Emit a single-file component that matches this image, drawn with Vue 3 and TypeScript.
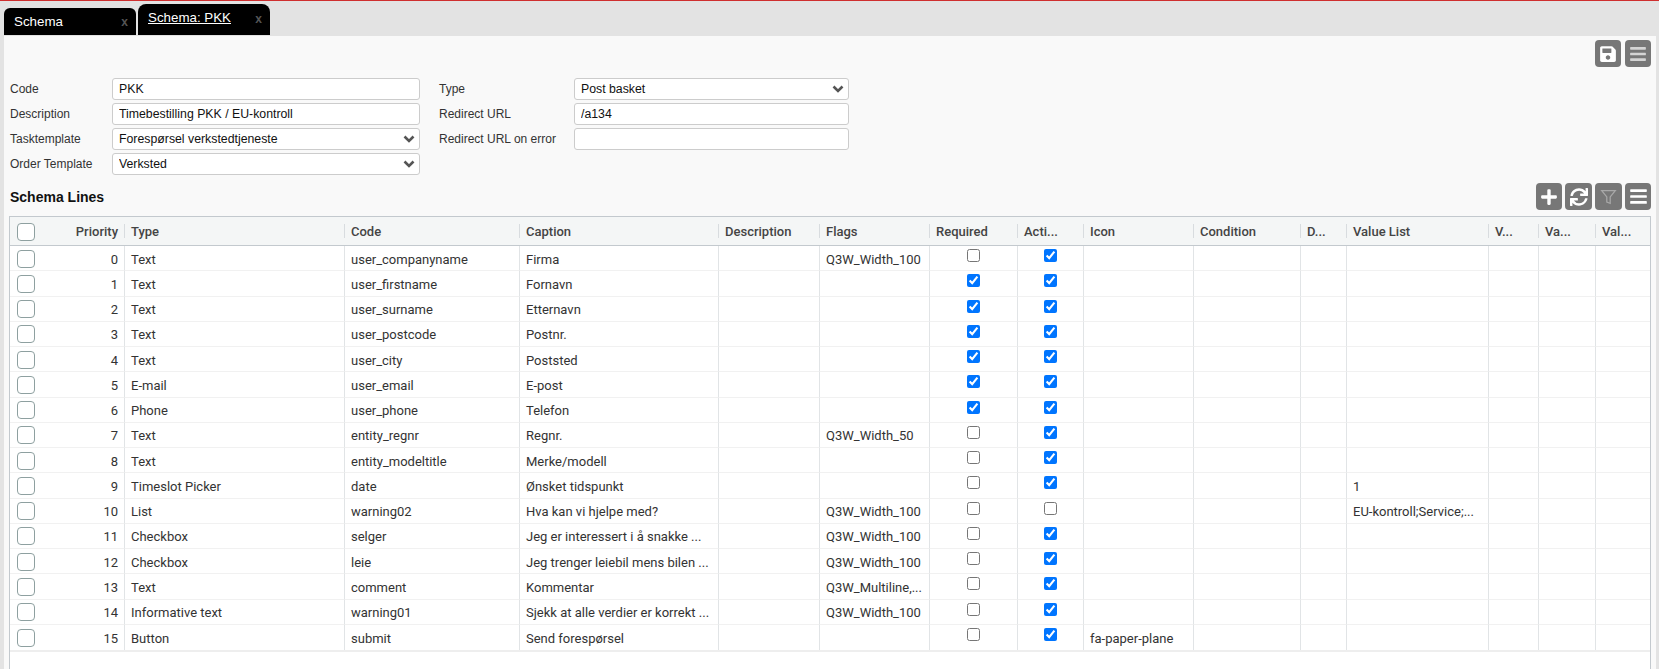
<script setup lang="ts">
interface Col {
  label: string
  width: number
  cls?: string
}
interface Line {
  type: string
  code: string
  caption: string
  flags?: string
  required: boolean
  active: boolean
  icon?: string
  valueList?: string
}

const columns: Col[] = [
  { label: "", width: 49, cls: "sel" },
  { label: "Priority", width: 65, cls: "num" },
  { label: "Type", width: 220 },
  { label: "Code", width: 175 },
  { label: "Caption", width: 199 },
  { label: "Description", width: 101 },
  { label: "Flags", width: 110 },
  { label: "Required", width: 88 },
  { label: "Acti...", width: 66 },
  { label: "Icon", width: 110 },
  { label: "Condition", width: 107 },
  { label: "D...", width: 46 },
  { label: "Value List", width: 142 },
  { label: "V...", width: 50 },
  { label: "Va...", width: 57 },
  { label: "Val...", width: 57 },
]

const lines: Line[] = [
  { type: "Text", code: "user_companyname", caption: "Firma", flags: "Q3W_Width_100", required: false, active: true },
  { type: "Text", code: "user_firstname", caption: "Fornavn", required: true, active: true },
  { type: "Text", code: "user_surname", caption: "Etternavn", required: true, active: true },
  { type: "Text", code: "user_postcode", caption: "Postnr.", required: true, active: true },
  { type: "Text", code: "user_city", caption: "Poststed", required: true, active: true },
  { type: "E-mail", code: "user_email", caption: "E-post", required: true, active: true },
  { type: "Phone", code: "user_phone", caption: "Telefon", required: true, active: true },
  { type: "Text", code: "entity_regnr", caption: "Regnr.", flags: "Q3W_Width_50", required: false, active: true },
  { type: "Text", code: "entity_modeltitle", caption: "Merke/modell", required: false, active: true },
  { type: "Timeslot Picker", code: "date", caption: "Ønsket tidspunkt", required: false, active: true, valueList: "1" },
  { type: "List", code: "warning02", caption: "Hva kan vi hjelpe med?", flags: "Q3W_Width_100", required: false, active: false, valueList: "EU-kontroll;Service;..." },
  { type: "Checkbox", code: "selger", caption: "Jeg er interessert i å snakke ...", flags: "Q3W_Width_100", required: false, active: true },
  { type: "Checkbox", code: "leie", caption: "Jeg trenger leiebil mens bilen ...", flags: "Q3W_Width_100", required: false, active: true },
  { type: "Text", code: "comment", caption: "Kommentar", flags: "Q3W_Multiline,...", required: false, active: true },
  { type: "Informative text", code: "warning01", caption: "Sjekk at alle verdier er korrekt ...", flags: "Q3W_Width_100", required: false, active: true },
  { type: "Button", code: "submit", caption: "Send forespørsel", required: false, active: true, icon: "fa-paper-plane" },
]

const barsPath = "M16 132h416c8.837 0 16-7.163 16-16V76c0-8.837-7.163-16-16-16H16C7.163 60 0 67.163 0 76v40c0 8.837 7.163 16 16 16zm0 160h416c8.837 0 16-7.163 16-16v-40c0-8.837-7.163-16-16-16H16c-8.837 0-16 7.163-16 16v40c0 8.837 7.163 16 16 16zm0 160h416c8.837 0 16-7.163 16-16v-40c0-8.837-7.163-16-16-16H16c-8.837 0-16 7.163-16 16v40c0 8.837 7.163 16 16 16z"
</script>

<template>
  <div class="page">
    <nav class="tabs">
      <div class="tab">
        <span class="tab-name">Schema</span>
        <span class="tab-x">x</span>
      </div>
      <div class="tab tab-active">
        <a class="tab-name">Schema: PKK</a>
        <span class="tab-x">x</span>
      </div>
    </nav>

    <main class="panel">
      <div class="toolbar toolbar-top">
        <button class="tool" type="button">
          <svg viewBox="0 0 448 512" width="16" height="18"><path fill="#fff" d="M433.941 129.941l-83.882-83.882A48 48 0 0 0 316.118 32H48C21.49 32 0 53.49 0 80v352c0 26.51 21.49 48 48 48h352c26.51 0 48-21.49 48-48V163.882a48 48 0 0 0-14.059-33.941zM224 416c-35.346 0-64-28.654-64-64 0-35.346 28.654-64 64-64s64 28.654 64 64c0 35.346-28.654 64-64 64zm96-304.52V212c0 6.627-5.373 12-12 12H76c-6.627 0-12-5.373-12-12V108c0-6.627 5.373-12 12-12h228.52c3.183 0 6.235 1.264 8.485 3.515l3.48 3.48A11.996 11.996 0 0 1 320 111.48z" /></svg>
        </button>
        <button class="tool" type="button">
          <svg viewBox="0 0 448 512" width="16" height="18"><path fill="#d4d4d4" :d="barsPath" /></svg>
        </button>
      </div>

      <div class="form">
        <div class="form-col col-left">
          <div class="field"><label>Code</label><input type="text" value="PKK" /></div>
          <div class="field"><label>Description</label><input type="text" value="Timebestilling PKK / EU-kontroll" /></div>
          <div class="field">
            <label>Tasktemplate</label>
            <select><option>Forespørsel verkstedtjeneste</option></select>
          </div>
          <div class="field">
            <label>Order Template</label>
            <select><option>Verksted</option></select>
          </div>
        </div>
        <div class="form-col col-right">
          <div class="field">
            <label>Type</label>
            <select><option>Post basket</option></select>
          </div>
          <div class="field"><label>Redirect URL</label><input type="text" value="/a134" /></div>
          <div class="field"><label>Redirect URL on error</label><input type="text" value="" /></div>
        </div>
      </div>

      <div class="section-head">
        <h2>Schema Lines</h2>
        <div class="toolbar">
          <button class="tool" type="button">
            <svg viewBox="0 0 448 512" width="16" height="18"><path fill="#fff" d="M416 208H272V64c0-17.670-14.330-32-32-32h-32c-17.670 0-32 14.330-32 32v144H32c-17.670 0-32 14.330-32 32v32c0 17.670 14.330 32 32 32h144v144c0 17.670 14.330 32 32 32h32c17.670 0 32-14.330 32-32V304h144c17.670 0 32-14.330 32-32v-32c0-17.670-14.330-32-32-32z" /></svg>
          </button>
          <button class="tool tool-wide" type="button">
            <svg viewBox="0 0 512 512" width="18" height="18"><path fill="#fff" d="M440.65 12.57l4 82.77A247.16 247.16 0 0 0 255.83 8C134.73 8 33.91 94.92 12.29 209.82A12 12 0 0 0 24.09 224h49.05a12 12 0 0 0 11.67-9.26 175.91 175.91 0 0 1 317-56.94l-101.46-4.86a12 12 0 0 0-12.57 12v47.41a12 12 0 0 0 12 12H500a12 12 0 0 0 12-12V12a12 12 0 0 0-12-12h-47.37a12 12 0 0 0-11.98 12.57zM255.83 432a175.61 175.61 0 0 1-146-77.8l101.8 4.87a12 12 0 0 0 12.57-12v-47.4a12 12 0 0 0-12-12H12a12 12 0 0 0-12 12V500a12 12 0 0 0 12 12h47.35a12 12 0 0 0 12-12.6l-4.15-82.57A247.17 247.17 0 0 0 255.83 504c121.11 0 221.93-86.92 243.55-201.82a12 12 0 0 0-11.8-14.18h-49.05a12 12 0 0 0-11.67 9.26A175.86 175.86 0 0 1 255.83 432z" /></svg>
          </button>
          <button class="tool tool-wide" type="button">
            <svg viewBox="0 0 20 20" width="17" height="17"><path fill="none" stroke="#a8a8a8" stroke-width="1.500" d="M2 3h16l-6 7.500V18l-4-1.500v-6z" /></svg>
          </button>
          <button class="tool" type="button">
            <svg viewBox="0 0 448 512" width="17" height="19"><path fill="#fff" :d="barsPath" /></svg>
          </button>
        </div>
      </div>

      <div class="grid-wrap">
        <table class="grid">
          <colgroup>
            <col v-for="c in columns" :key="c.label + c.width" :style="{ width: c.width + 'px' }" />
          </colgroup>
          <thead>
            <tr>
              <th v-for="c in columns" :key="c.label + c.width" :class="c.cls">
                <span v-if="c.cls === 'sel'" class="pick"></span>
                <template v-else>{{ c.label }}</template>
              </th>
            </tr>
          </thead>
          <tbody>
            <tr v-for="(line, i) in lines" :key="line.code">
              <td class="sel"><span class="pick"></span></td>
              <td class="num">{{ i }}</td>
              <td>{{ line.type }}</td>
              <td>{{ line.code }}</td>
              <td>{{ line.caption }}</td>
              <td></td>
              <td>{{ line.flags }}</td>
              <td class="chk"><input type="checkbox" :checked="line.required" /></td>
              <td class="chk"><input type="checkbox" :checked="line.active" /></td>
              <td>{{ line.icon }}</td>
              <td></td>
              <td></td>
              <td>{{ line.valueList }}</td>
              <td></td>
              <td></td>
              <td></td>
            </tr>
          </tbody>
        </table>
      </div>
    </main>
  </div>
</template>

<style>
html,
body {
  margin: 0;
  overflow: hidden;
}
</style>

<style scoped>
.page {
  height: 669px;
  box-sizing: border-box;
  border-top: 1px solid #cf2f2f;
  background: #e3e3e3;
  display: flex;
  flex-direction: column;
  font-family: "Liberation Sans", Arial, sans-serif;
  overflow: hidden;
}

.tabs {
  height: 35px;
  flex: none;
  display: flex;
  align-items: flex-end;
  gap: 2px;
  padding-left: 4px;
}

.tab {
  width: 132px;
  height: 27px;
  margin-bottom: 1px;
  box-sizing: border-box;
  background: #000;
  color: #fff;
  border-radius: 6px 6px 0 0;
  display: flex;
  justify-content: space-between;
  align-items: center;
  padding: 0 8px 0 10px;
  font-size: 13.330px;
}

.tab-active {
  height: 31px;
  align-items: flex-start;
  padding-top: 6px;
  border-radius: 8px 8px 0 0;
}

.tab-active .tab-name {
  text-decoration: underline;
}

.tab-active .tab-x {
  margin-top: 2px;
}

.tab-x {
  color: #555;
  font-weight: bold;
  font-size: 12px;
}

.panel {
  flex: 1;
  margin: 0 3px 0 4px;
  background: #f9f9f9;
  padding: 4px 5px 0;
  display: flex;
  flex-direction: column;
  min-height: 0;
}

.toolbar {
  display: flex;
  gap: 3px;
}

.toolbar-top {
  justify-content: flex-end;
  height: 27px;
  gap: 4px;
}

.tool {
  width: 26px;
  height: 27px;
  padding: 0;
  border: 0;
  border-radius: 4px;
  background: #777;
  display: flex;
  align-items: center;
  justify-content: center;
}

.tool-wide {
  width: 27px;
}

.form {
  display: flex;
  margin-top: 11px;
  margin-left: 1px;
}

.form-col {
  display: flex;
  flex-direction: column;
  gap: 3px;
}

.col-left {
  width: 411px;
}

.col-left .field input,
.col-left .field select {
  width: 308px;
}

.col-right {
  margin-left: 18px;
}

.col-right .field input,
.col-right .field select {
  width: 275px;
}

.field {
  display: flex;
  align-items: center;
  height: 22px;
}

.col-left label {
  width: 102px;
}

.col-right label {
  width: 135px;
}

label {
  font-size: 12px;
  color: #333;
  flex: none;
}

input[type="text"],
select {
  box-sizing: border-box;
  height: 22px;
  border: 1px solid #ccc;
  border-radius: 3px;
  background-color: #fff;
  font-family: "Liberation Sans", Arial, sans-serif;
  font-size: 12.300px;
  color: #111;
  padding: 0 6px;
  outline: none;
}

select {
  appearance: none;
  background-image: url("data:image/svg+xml,%3Csvg xmlns='http://www.w3.org/2000/svg' viewBox='0 0 12 8'%3E%3Cpath d='M1.500 1.500 6 6l4.500-4.500' fill='none' stroke='%23555' stroke-width='2.600'/%3E%3C/svg%3E");
  background-repeat: no-repeat;
  background-position: right 4px center;
  background-size: 12px 8px;
}

.section-head {
  display: flex;
  justify-content: space-between;
  align-items: flex-end;
  margin-top: 8px;
  height: 27px;
}

h2 {
  margin: 0 0 5px 1px;
  font-size: 14px;
  font-weight: bold;
  color: #111;
}

.grid-wrap {
  flex: 1;
  margin-top: 6px;
  border: 1px solid #c3c9ce;
  border-bottom: 0;
  background: #fff;
  overflow: hidden;
}

.grid {
  table-layout: fixed;
  border-collapse: separate;
  border-spacing: 0;
  width: 1640px;
  font-family: Roboto, sans-serif;
  font-size: 13px;
  color: #333;
  border-bottom: 2px solid #eee;
}

th {
  height: 29px;
  box-sizing: border-box;
  background: #f4f6f6;
  border-bottom: 1px solid #c3c9ce;
  padding: 0 6px 0 7px;
  text-align: left;
  font-weight: 500;
  font-size: 13px;
  color: #444;
  position: relative;
  white-space: nowrap;
  overflow: hidden;
}

th + th:not(.num)::before {
  content: "";
  position: absolute;
  left: 0;
  top: 7px;
  bottom: 7px;
  width: 1px;
  background: #d8dcdf;
}

td {
  height: 25.250px;
  box-sizing: border-box;
  padding: 2px 6px 0;
  border-bottom: 1px solid #f1f1f1;
  white-space: nowrap;
  overflow: hidden;
}

td + td:not(.num) {
  border-left: 1px solid #e1e4e6;
}

tr:last-child td {
  border-bottom: 0;
}

.num {
  text-align: right;
}

.sel {
  padding: 1px 0 0 7px;
}

.chk {
  text-align: center;
  padding-top: 0;
}

.chk input {
  margin: 0 0 5px;
  vertical-align: middle;
}

.pick {
  display: block;
  width: 18px;
  height: 18px;
  box-sizing: border-box;
  background: #fff;
  border: 1px solid #8ea0a0;
  border-radius: 4px;
}
</style>
